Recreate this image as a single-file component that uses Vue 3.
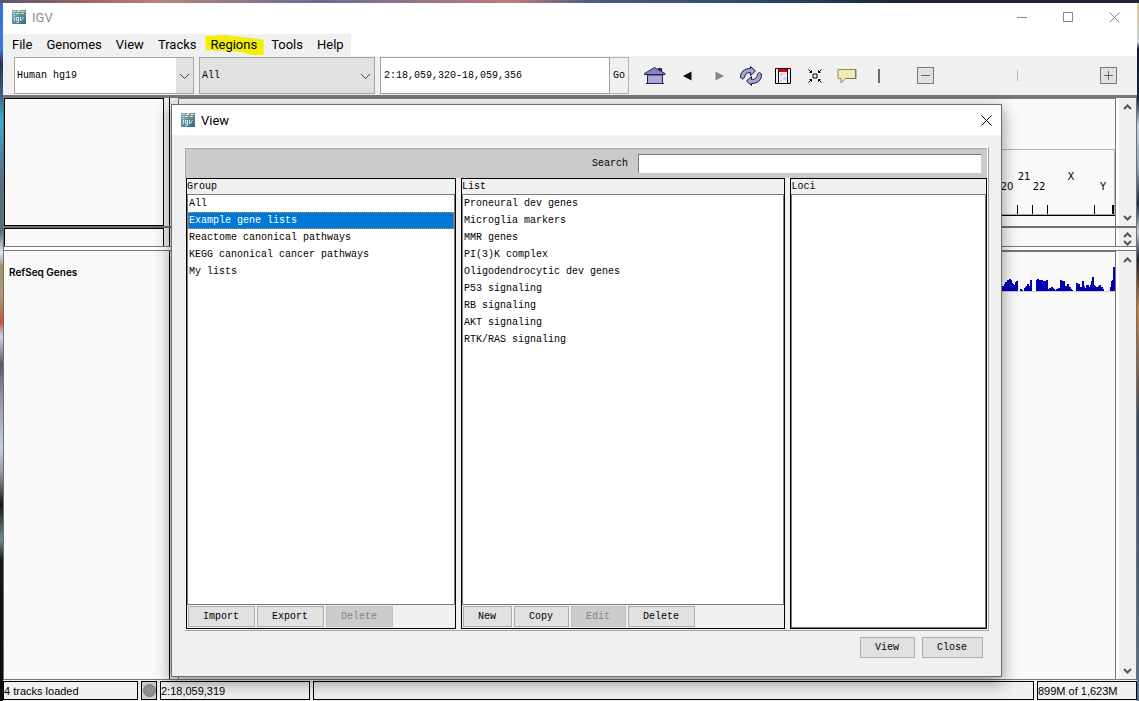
<script setup>
import { ref } from 'vue'

const menus = ['File', 'Genomes', 'View', 'Tracks', 'Regions', 'Tools', 'Help']
const groups = ['All', 'Example gene lists', 'Reactome canonical pathways', 'KEGG canonical cancer pathways', 'My lists']
const lists = [
  'Proneural dev genes', 'Microglia markers', 'MMR genes', 'PI(3)K complex', 'Oligodendrocytic dev genes',
  'P53 signaling', 'RB signaling', 'AKT signaling', 'RTK/RAS signaling'
]
const selected = ref('Example gene lists')
const locus = ref('2:18,059,320-18,059,356')
const search = ref('')

const chromosomes = [
  { name: '20', x: 6, y: 41 }, { name: '21', x: 23, y: 31 }, { name: '22', x: 38, y: 41 },
  { name: 'X', x: 70, y: 31 }, { name: 'Y', x: 102, y: 41 }
]
const ticks = [17, 32, 47, 94]

// Each entry is [x, height] of one bar in the gene density track.
const bars = [
  [0, 3], [1, 5], [3, 7], [4, 9], [5, 6], [6, 11], [7, 9], [8, 12], [9, 11], [10, 8], [11, 7], [12, 6], [14, 9], [15, 10],
  [19, 2], [20, 1], [23, 3], [24, 4], [25, 5], [26, 7], [27, 5], [29, 11],
  [35, 11], [36, 12], [37, 10], [38, 11], [39, 9], [40, 11], [41, 9], [42, 10], [43, 10], [44, 9], [45, 11],
  [47, 2], [48, 3], [50, 4], [51, 3], [52, 2], [54, 1], [55, 2], [57, 3], [58, 3], [59, 11], [60, 10], [61, 9], [62, 10],
  [63, 4], [64, 5], [65, 5], [66, 7], [67, 4], [68, 4], [69, 2], [70, 1], [75, 8], [76, 7], [77, 7], [78, 4], [79, 4],
  [81, 10], [82, 5], [83, 3], [85, 6], [86, 6], [87, 3], [88, 4], [89, 6], [90, 10], [91, 14], [92, 6], [93, 5],
  [95, 4], [96, 2], [97, 5], [98, 6], [99, 4], [100, 4], [101, 2], [109, 4], [110, 10], [111, 11], [112, 24]
]
</script>

<template>
  <div class="desktop">
    <main class="window">
      <header class="titlebar">
        <svg class="logo" width="14" height="14" viewBox="0 0 14 14" aria-hidden="true">
          <defs>
            <linearGradient id="logoFill" x1="0" y1="0" x2="1" y2="1">
              <stop offset="0" stop-color="#86b5c1" /><stop offset="1" stop-color="#2f6b7d" />
            </linearGradient>
          </defs>
          <rect width="14" height="14" fill="url(#logoFill)" />
          <path d="M1 1h3v1H1zM5 1h3v1H5zM1 3h2v1H1z" fill="#b9cdd0" />
          <path d="M6 0h2v2H6zM9 1h4v1H9zM4 3h3v1H4zM9 3h3v1H9z" fill="#f0dc91" />
          <path d="M2.500 7v4M2.500 5v1M4.500 7.500h2v3h-2zM6.500 7v5.500h-2M8.500 7v3.500h1l2-3.500" fill="none" stroke="#d3e3e7" />
        </svg>
        <span class="title">IGV</span>
        <div class="controls">
          <button aria-label="Minimize"><svg width="11" height="11"><path d="M0 5.500h10" /></svg></button>
          <button aria-label="Maximize"><svg width="11" height="11"><path d="M.5.5h9v9h-9z" /></svg></button>
          <button aria-label="Close window"><svg width="11" height="11"><path d="M.5.5l10 10M10.500.5l-10 10" /></svg></button>
        </div>
      </header>

      <nav class="menubar">
        <button v-for="m in menus" :key="m" class="menu">
          <svg v-if="m === 'Regions'" class="marker" viewBox="0 0 60 21" preserveAspectRatio="none" aria-hidden="true">
            <path d="M0 1 22 0q9 2 17 2 12 2 21 3v16H49Q35 17 27 17L1 16z" fill="#f2ee05" />
          </svg>
          <span>{{ m }}</span>
        </button>
      </nav>

      <section class="toolbar">
        <div class="combo genome">
          <select aria-label="Genome"><option>Human hg19</option></select>
          <svg width="11" height="7" aria-hidden="true"><path d="M1 1l4.500 4.500L10 1" /></svg>
        </div>
        <div class="combo chrom">
          <select aria-label="Chromosome"><option>All</option></select>
          <svg width="11" height="7" aria-hidden="true"><path d="M1 1l4.500 4.500L10 1" /></svg>
        </div>
        <input v-model="locus" class="locus" aria-label="Locus">
        <button class="go">Go</button>
        <div class="tools">
          <button aria-label="Home">
            <svg width="22" height="18" viewBox="0 0 22 18">
              <path d="M3.500 7.500h15v9h-15z" fill="#a9a9dc" stroke="#24244c" />
              <path d="M14.500 1.500h3v5h-3z" fill="#343468" stroke="#1c1c42" />
              <path d="M.5 6.500 10.500.5l10.500 6v1H.5z" fill="#8686bb" stroke="#24244c" />
              <path d="M2 16.500h18" stroke="#24244c" />
              <path d="M4 8.500h14" stroke="#6a6aa5" />
            </svg>
          </button>
          <button aria-label="Back"><svg width="9" height="10"><path d="M8.500.5v9L0 5z" fill="#111" /></svg></button>
          <button aria-label="Forward"><svg width="9" height="10"><path d="M.5.5v9L9 5z" fill="#858585" /></svg></button>
          <button aria-label="Refresh">
            <svg width="22" height="20" viewBox="0 0 22 20" fill="#a5a5d2" stroke="#15153a">
              <path d="M.5 11.500C.5 6 4 2.500 10.500 2.500v-2l5 4.500-5 4.500v-3C7 6.500 5 8 4.500 11.500L2.500 13z" />
              <path d="M21.500 8c0 6-3.500 9.500-10 9.500v2l-5-4.500 5-4.500v3c3.500 0 5.500-1.500 6-5.500l2-1.500z" />
            </svg>
          </button>
          <button aria-label="Region of interest">
            <svg width="16" height="16" viewBox="0 0 16 16">
              <path d="M.5.5h15v15H.5z" fill="#eef" stroke="#000" />
              <path d="M4 1h8v3H4z" fill="#e20000" />
              <path d="M5 5h3v3H5zM8 9h3v3H8zM5 12h2v2H5z" fill="#cdcdf4" />
              <path d="M8 5h3v2H8zM5 9h2v2H5z" fill="#f7dce7" />
              <path d="M3.500 1v14M12.500 1v14" stroke="#111" />
            </svg>
          </button>
          <button aria-label="Fit to window">
            <svg width="14" height="14" viewBox="0 0 14 14" fill="none" stroke="#000">
              <path d="M5 5h4v4H5z" />
              <path d="M.5.5l3 3M13.500.5l-3 3M.5 13.500l3-3M13.500 13.500l-3-3" />
              <path d="M3.500 1.500v2h-2M10.500 1.500v2h2M3.500 12.500v-2h-2M10.500 12.500v-2h2" />
            </svg>
          </button>
          <button aria-label="Popup text">
            <svg width="20" height="17" viewBox="0 0 20 17">
              <path d="M1 2.500h18v9H8.500L4 16v-4.500H1z" fill="#eeeab0" stroke="#8d8865" />
              <path d="M18.500 3v8.500H9" fill="none" stroke="#77745c" />
            </svg>
          </button>
          <button aria-label="Ruler"><svg width="2" height="14"><path d="M0 0h2v14H0z" fill="#6c6c6c" /></svg></button>
        </div>
        <button class="zoom" aria-label="Zoom out"><svg width="9" height="9"><path d="M0 4.500h9" /></svg></button>
        <div class="zoomscale"></div>
        <button class="zoom" aria-label="Zoom in"><svg width="9" height="9"><path d="M0 4.500h9M4.500 0v9" /></svg></button>
      </section>

      <section class="tracks">
        <div class="row header">
          <div class="names"><div class="box"></div></div>
          <div class="data">
            <svg class="ideogram" width="114" height="68" viewBox="0 0 114 68">
              <path d="M0 .5h113.500V67" fill="none" stroke="#b5b5b5" />
              <text v-for="c in chromosomes" :key="c.name" :x="c.x" :y="c.y" text-anchor="middle">{{ c.name }}</text>
              <path v-for="t in ticks" :key="t" :d="`M${t - .5} 56v9`" stroke="#000" />
              <path d="M111 56h2v9h-2z" />
              <path d="M0 65.500h114" stroke="#aaa" />
              <path d="M0 66.500h114" stroke="#000" />
            </svg>
          </div>
          <div class="scroll">
            <svg width="9" height="6"><path d="M1 5l3.500-3.500L8 5" /></svg>
            <svg width="9" height="6"><path d="M1 1l3.500 3.500L8 1" /></svg>
          </div>
        </div>
        <div class="row middle">
          <div class="names"><div class="box"></div></div>
          <div class="data"></div>
          <div class="scroll">
            <svg width="9" height="6"><path d="M1 5l3.500-3.500L8 5" /></svg>
            <svg width="9" height="6"><path d="M1 1l3.500 3.500L8 1" /></svg>
          </div>
        </div>
        <div class="row genes">
          <div class="names"><span class="track">RefSeq Genes</span></div>
          <div class="data">
            <svg class="density" width="114" height="26" viewBox="0 0 114 26" fill="#0000b2">
              <path d="M0 25.500h114" stroke="#ccccda" />
              <rect v-for="b in bars" :key="b[0]" :x="b[0]" :y="25 - b[1]" width="2" :height="b[1]" />
            </svg>
          </div>
          <div class="scroll">
            <svg width="9" height="6"><path d="M1 5l3.500-3.500L8 5" /></svg>
            <svg width="9" height="6"><path d="M1 1l3.500 3.500L8 1" /></svg>
          </div>
        </div>
      </section>

      <footer class="status">
        <div class="cell loaded">4 tracks loaded</div>
        <div class="cell lamp"><i></i></div>
        <div class="cell position">2:18,059,319</div>
        <div class="cell message"></div>
        <div class="cell memory">899M of 1,623M</div>
      </footer>
    </main>

    <section class="dialog" role="dialog" aria-labelledby="dialogTitle">
      <header class="dialog-title">
        <svg class="logo" width="14" height="14" viewBox="0 0 14 14" aria-hidden="true">
          <rect width="14" height="14" fill="url(#logoFill)" />
          <path d="M1 1h3v1H1zM5 1h3v1H5zM1 3h2v1H1z" fill="#b9cdd0" />
          <path d="M6 0h2v2H6zM9 1h4v1H9zM4 3h3v1H4zM9 3h3v1H9z" fill="#f0dc91" />
          <path d="M2.500 7v4M2.500 5v1M4.500 7.500h2v3h-2zM6.500 7v5.500h-2M8.500 7v3.500h1l2-3.500" fill="none" stroke="#d3e3e7" />
        </svg>
        <span id="dialogTitle">View</span>
        <button class="close" aria-label="Close dialog"><svg width="11" height="11"><path d="M.5.5l10 10M10.500.5l-10 10" /></svg></button>
      </header>

      <div class="content">
        <div class="frame">
          <div class="searchbar">
            <label for="search">Search</label>
            <input id="search" v-model="search">
          </div>
          <div class="panes">
            <div class="pane group">
              <h2>Group</h2>
              <ul>
                <li v-for="g in groups" :key="g" :class="{ selected: g === selected }" @click="selected = g">{{ g }}</li>
              </ul>
              <div class="actions">
                <button class="btn">Import</button>
                <button class="btn">Export</button>
                <button class="btn" disabled>Delete</button>
              </div>
            </div>
            <div class="pane list">
              <h2>List</h2>
              <ul>
                <li v-for="l in lists" :key="l">{{ l }}</li>
              </ul>
              <div class="actions">
                <button class="btn">New</button>
                <button class="btn">Copy</button>
                <button class="btn" disabled>Edit</button>
                <button class="btn">Delete</button>
              </div>
            </div>
            <div class="pane loci">
              <h2>Loci</h2>
              <ul></ul>
            </div>
          </div>
        </div>
        <div class="confirm">
          <button class="btn">View</button>
          <button class="btn">Close</button>
        </div>
      </div>
    </section>
  </div>
</template>

<style>
body { margin: 0; }
</style>

<style scoped>
* { box-sizing: border-box; }
button { margin: 0; padding: 0; border: 0; background: none; color: inherit; font: inherit; }
svg { display: block; flex: none; }

.desktop {
  position: relative;
  display: flex;
  min-height: 100vh;
  padding: 3px 2px 0 3px;
  background:
    linear-gradient(90deg, #5b5371, #a2685f 8%, #b98378 14%, #6c6c97 28%, #c07a7a 45%, #4a5c86 52%, #2c4a6c 66%, #1c2238 80%, #20243c) top / 100% 3px no-repeat,
    linear-gradient(#2f6fd8, #3a7bdc 7%, #26344f 9%, #3b5775 13%, #2fb4de 17%, #56708a 25%, #52707c 33%, #dfe5f0 36%, #a5916d 38%, #b39a70 42%, #c8523c 46%, #cdd6e8 48%, #5b5668 52%, #8b8ea8 56%, #c6d2e6 64%, #8c8c9c 68%, #151515 72%, #6d8c94 77%, #141414 80%, #0c0c0c) left / 3px 100% no-repeat,
    linear-gradient(#d8c7a0, #cdd2da 6%, #161a2c 7%, #1b2036 14%, #c6ced8 18%, #93a0b0 24%, #222a3c 29%, #c5c9cc 33%, #20222c 37%, #c08048 44%, #3f4a5c 60%, #5b6f8c) right / 2px 100% no-repeat;
  color: #000;
  font-family: Roboto, "Noto Sans", sans-serif;
  font-size: 13px;
}

.window { display: flex; flex: 1; flex-direction: column; min-width: 0; background: #fff; }

.titlebar { display: flex; height: 31px; padding-left: 9px; color: #8c8c8c; }
.titlebar .logo { margin: 7px 6px 0 0; }
.title { line-height: 30px; }
.controls { display: flex; height: 28px; margin-left: auto; }
.controls button { display: grid; place-items: center; width: 46px; }
.controls path { fill: none; stroke: #858585; }

.menubar { display: flex; align-self: flex-start; height: 22px; padding-left: 2px; background: #f0f0f0; }
.menu { position: relative; padding: 0 7px; line-height: 22px; }
.menu span { position: relative; }
.marker { position: absolute; top: 1px; left: 2px; width: calc(100% - 2px); height: 20px; }

.toolbar { display: flex; align-items: center; height: 39px; padding: 0 20px 0 11px; background: #f0f0f0; }
.combo { position: relative; height: 37px; border: 1px solid #a5a5a5; background: #e1e1e1; }
.combo select {
  width: 100%; height: 100%; padding: 0 2px; border: 0; background: none; appearance: none;
  color: #000; font: 10px "Liberation Mono", monospace;
}
.combo svg { position: absolute; top: 15px; right: 3px; pointer-events: none; }
.combo path { fill: none; stroke: #444; }
.genome { width: 180px; margin-right: 5px; }
.genome select { width: calc(100% - 17px); background: #fff; }
.chrom { width: 176px; margin-right: 5px; }
.locus {
  width: 230px; height: 37px; padding: 0 3px; border: 1px solid #a0a0a0; border-radius: 0;
  background: #fff; font: 10px "Liberation Mono", monospace;
}
.go { width: 19px; height: 37px; border: 1px solid #b5b5b5; border-left: 0; font: 10px "Liberation Mono", monospace; }
.tools { display: flex; margin-left: 10px; }
.tools button { display: grid; place-items: center; width: 32px; height: 26px; }
.zoom { display: grid; place-items: center; width: 17px; height: 17px; border: 1px solid #777; background: #e1e1e1; }
.zoom path { stroke: #666; }
.tools + .zoom { margin-left: 22px; }
.zoomscale { flex: 1; height: 11px; background: linear-gradient(#b8b8b8, #b8b8b8) 50% 0 / 1px 100% no-repeat; }

.tracks { display: flex; flex: 1; flex-direction: column; border-top: 3px solid #777; border-right: 1px solid #707070; border-left: 1px solid #707070; background: #f0f0f0; }
.row { display: flex; }
.names { width: 166px; border-right: 1px solid #000; }
.names .box { width: 160px; height: 100%; border: 1px solid #000; background: #fafafa; }
.data { display: flex; flex: 1; justify-content: flex-end; margin-left: 8px; border: solid #777; border-width: 1px 1px 0; background: #fafafa; }
.scroll { display: flex; flex-direction: column; align-items: center; justify-content: space-between; width: 20px; padding: 6px 0 5px; border-left: 3px solid #fff; }
.scroll path { fill: none; stroke: #555; stroke-width: 2; }
.header { height: 130px; border-bottom: 2px solid #707070; }
.ideogram { align-self: flex-end; margin-bottom: 9px; }
.ideogram text { font: 10px "DejaVu Sans", sans-serif; }
.middle { height: 19px; border-bottom: 1px solid #777; }
.middle .box { border-bottom: 0; }
.middle .data { border-top: 0; }
.middle .scroll { padding: 4px 0 0; }
.genes { flex: 1; margin-top: 3px; border-top: 1px solid #777; border-bottom: 1px solid #777; background: #f0f0f0; box-shadow: 0 -3px #fff; }
.genes .names { background: #fafafa; }
.track { display: block; padding: 14px 0 0 5px; font: 600 10px/14px Inter, "Liberation Sans", sans-serif; }
.density { margin-top: 14px; }

.status { display: flex; gap: 3px; height: 21px; padding: 1px 0; background: #f0f0f0; font: 11px/18px "Liberation Sans", Arial, sans-serif; }
.cell { border: 1px solid #000; white-space: nowrap; }
.loaded { width: 135px; }
.lamp { display: grid; place-items: center; width: 16px; background: #ccc; }
.lamp i { width: 13px; height: 13px; border: 1px solid #777; border-radius: 50%; background: #8e8e8e; }
.position { width: 150px; }
.message { flex: 1; }
.memory { width: 100px; }

.dialog {
  position: absolute;
  top: 104px;
  right: 137px;
  bottom: 24px;
  left: 171px;
  display: flex;
  flex-direction: column;
  border: 1px solid #6d6d6d;
  background: #f0f0f0;
  box-shadow: 0 5px 15px 1px rgba(0, 0, 0, .4);
}
.dialog-title { display: flex; align-items: center; height: 30px; padding-left: 9px; background: #fff; }
.dialog-title .logo { margin-right: 6px; }
.close { display: grid; place-items: center; width: 30px; height: 30px; margin-left: auto; }
.close path { stroke: #000; }

.content { display: flex; flex: 1; flex-direction: column; padding: 12px 12px 18px 13px; font: 10px "Liberation Mono", monospace; }
.frame { display: flex; flex: 1; flex-direction: column; padding-right: 1px; border: solid #a5a5a5; border-width: 0 1px 1px 0; background: #fff; }
.searchbar {
  display: flex; align-items: center; justify-content: flex-end; gap: 10px; height: 30px; margin-top: 1px; padding-right: 6px;
  border: solid #a5a5a5; border-width: 1px 0 0 1px; background: #cbcbcb;
}
.searchbar input {
  width: 343px; height: 19px; padding: 0 3px; border: solid #777; border-width: 1px 0 0 1px; border-radius: 0;
  background: #fff; font: inherit;
}
.panes { display: flex; flex: 1; gap: 5px; padding: 0 0 1px 1px; background: #f0f0f0; }
.pane { display: flex; flex-direction: column; min-width: 0; border: 1px solid #000; background: #f0f0f0; }
.group { flex: 270 1 0; }
.list { flex: 325 1 0; }
.loci { flex: 196 1 0; }
.pane h2 { height: 15px; margin: 0; font: inherit; line-height: 15px; }
.pane ul { flex: 1; margin: 0; padding: 0; border: 1px solid #7a7a7a; background: #fff; list-style: none; }
.pane li { height: 17px; padding: 0 1px; line-height: 17px; white-space: nowrap; cursor: default; }
.pane li.selected { padding: 0; border: 1px dotted #d98a3c; background: #0078d7; color: #fff; line-height: 15px; }
.actions { display: flex; gap: 2px; padding: 1px; }
.btn { height: 21px; padding: 0 15px 0 14px; border: 1px solid #adadad; background: #e1e1e1; }
.btn:disabled { border-color: #bfbfbf; background: #ccc; color: #838383; }
.confirm { display: flex; gap: 7px; justify-content: flex-end; padding: 6px 6px 0 0; }
</style>
